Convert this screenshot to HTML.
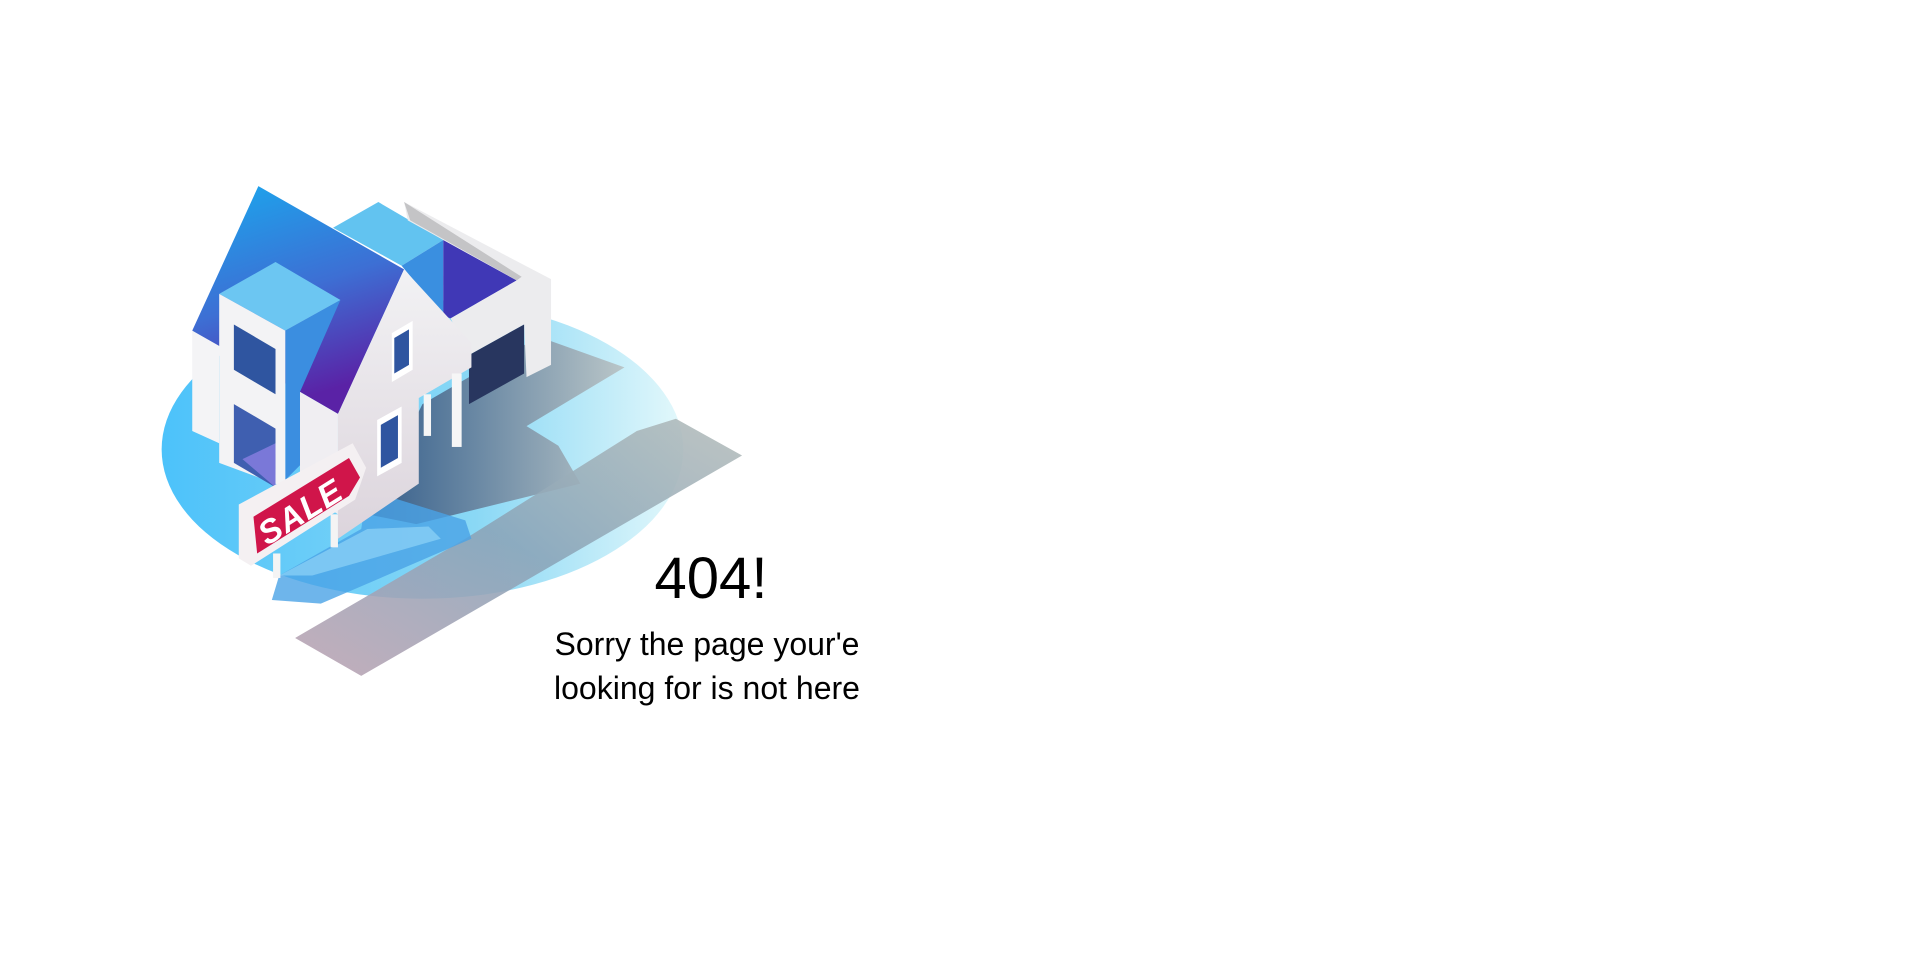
<!DOCTYPE html>
<html><head><meta charset="utf-8"><style>
html,body{margin:0;padding:0;background:#fff;width:1920px;height:980px;overflow:hidden;font-family:"Liberation Sans",Arial,sans-serif;}
svg{position:absolute;left:0;top:0}
.t1{position:absolute;left:611px;width:200px;top:544px;text-align:center;font-size:58px;color:#000;line-height:70px}
.t2{position:absolute;left:507px;width:400px;top:622px;text-align:center;font-size:32px;color:#000;line-height:44px}
</style></head><body>
<svg width="1920" height="980" viewBox="0 0 1920 980">
<defs>
<linearGradient id="ell" x1="0" x2="1" y1="0" y2="0"><stop offset="0" stop-color="#4cc2fa"/><stop offset="0.6" stop-color="#8ad8f5"/><stop offset="1" stop-color="#e3f8fb"/></linearGradient>
<linearGradient id="sh" x1="0" x2="1" y1="0" y2="0"><stop offset="0" stop-color="#24406f"/><stop offset="1" stop-color="#b6bcbc"/></linearGradient>
<linearGradient id="sh2" x1="0" x2="1" y1="1" y2="0"><stop offset="0" stop-color="#bca2b2"/><stop offset="0.5" stop-color="#8aa4b8"/><stop offset="1" stop-color="#b4bcba"/></linearGradient>
<linearGradient id="roof" x1="0" x2="0.3" y1="0" y2="1"><stop offset="0" stop-color="#1aa8ee"/><stop offset="0.55" stop-color="#3d6fd4"/><stop offset="1" stop-color="#5a22a6"/></linearGradient>
<linearGradient id="wall" x1="0" x2="0" y1="0" y2="1"><stop offset="0" stop-color="#f2f2f4"/><stop offset="1" stop-color="#dcd4dc"/></linearGradient>
</defs>
<g transform="scale(1.2245)">
<ellipse cx="345" cy="367" rx="213" ry="122" fill="url(#ell)"/>
<polygon points="345,330 440,275 510,300 430,348 456,364 474,395 340,428 300,420" fill="url(#sh)" opacity="0.8"/>
<polygon points="552,342 606,372 295,552 241,521 380,440 520,352" fill="url(#sh2)" opacity="0.88"/>
<polygon points="300,400 380,425 385,440 262,493 222,490 228,470 295,432" fill="#4aa3e6" opacity="0.8"/>
<polygon points="228,470 300,432 350,430 360,440 255,470" fill="#8fd3f6" opacity="0.7"/>
<polygon points="157,270 179,282 179,362 157,352" fill="#f4f4f6"/>
<polygon points="211,152 157,270 245,320 276,338 330,220" fill="url(#roof)"/>
<polygon points="272,186 309,165 362,196 328,217" fill="#62c3f0"/>
<polygon points="328,217 362,196 362,258" fill="#3a8fe0"/>
<polygon points="362,196 422,229 368,260 362,258" fill="#4038b6"/>
<polygon points="330,165 450,228 450,298 430,308 428,265 383,290 368,260 422,229 333,180" fill="#ececee"/>
<polygon points="330,165 335,180 422,229 426,226" fill="#c4c4c6"/>
<polygon points="383,290 428,265 428,305 383,330" fill="#28365f"/>
<polygon points="330,220 276,338 276,440 342,395 342,325 385,300 385,280" fill="url(#wall)"/>
<polygon points="320,272 337,262 337,302 320,312" fill="#fff"/>
<polygon points="322,276 334,269 334,298 322,305" fill="#2f55a0"/>
<polygon points="308,343 328,332 328,378 308,389" fill="#fff"/>
<polygon points="311,347 325,339 325,374 311,382" fill="#2f55a0"/>
<rect x="346" y="322" width="6" height="34" fill="#f6f6f6"/>
<rect x="369" y="305" width="8" height="60" fill="#f6f6f6"/>
<polygon points="233,270 278,245 245,320 245,380 233,392" fill="#3b8ee0"/>
<polygon points="179,240 225,214 278,245 233,270" fill="#6cc6f2"/>
<polygon points="179,240 233,270 233,398 179,378" fill="#f3f3f5"/>
<polygon points="191,265 225,285 225,322 191,302" fill="#2f55a0"/>
<polygon points="191,330 225,350 225,398 191,378" fill="#3f5fb0"/>
<polygon points="198,375 225,362 225,398" fill="#7a78d8"/>
<polygon points="245,320 276,338 276,420 245,400" fill="#f0eef2"/>
<rect x="223" y="452" width="6" height="20" fill="#f4f4f4"/>
<rect x="270" y="420" width="6" height="27" fill="#f4f4f4"/>
<polygon points="195,412 288,362 299,382 290,408 205,462 195,456" fill="#f4f0f2"/>
<polygon points="207,422 285,374 294,390 285,405 210,452" fill="#d0154a"/>
<text x="0" y="0" transform="translate(218,446) rotate(-32)" font-family="Liberation Sans,sans-serif" font-weight="bold" font-style="italic" font-size="27" letter-spacing="1" fill="#fff">SALE</text>
</g>
</svg>
<div class="t1">404!</div>
<div class="t2">Sorry the page your'e<br>looking for is not here</div>
</body></html>
